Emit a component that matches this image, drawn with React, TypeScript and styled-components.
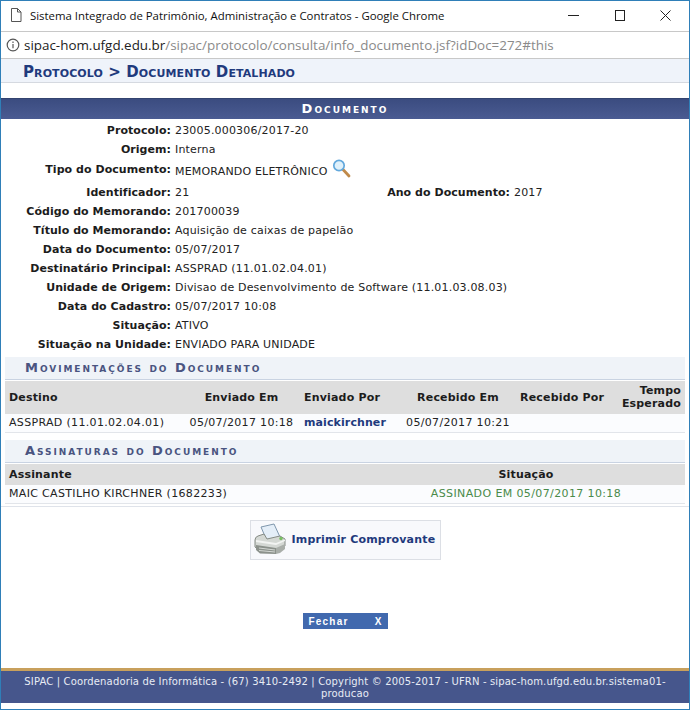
import { Fragment, FunctionComponent } from "react";
import styled, { createGlobalStyle } from "styled-components";

const GlobalStyle = createGlobalStyle`
  html, body {
    margin: 0;
    padding: 0;
    background: #ffffff;
  }
  * {
    box-sizing: border-box;
  }
`;

const Window = styled.div`
  width: 690px;
  height: 710px;
  display: flex;
  flex-direction: column;
  border: 1px solid #2f7fb8;
  font-family: "DejaVu Sans", Verdana, sans-serif;
  font-size: 11px;
  letter-spacing: 0.18px;
  color: #222222;
  background: #ffffff;
  overflow: hidden;
`;
const TitleBar = styled.div`
  height: 30px;
  flex: none;
  display: flex;
  align-items: center;
  padding: 0 1px 2px 8px;
  font-family: "Open Sans", sans-serif;
  font-size: 11.4px;
  letter-spacing: 0;
  color: #111111;
`;
const TitleText = styled.span`
  margin-left: 7px;
  flex: 1;
  white-space: nowrap;
`;
const WinButton = styled.div`
  width: 46px;
  height: 28px;
  display: flex;
  align-items: center;
  justify-content: center;
`;
const AddressBar = styled.div`
  height: 28px;
  flex: none;
  display: flex;
  align-items: center;
  padding-left: 5px;
  border-top: 1px solid #c8c8c8;
  border-bottom: 1px solid #c8c8c8;
  font-family: "Open Sans", sans-serif;
  font-size: 13.42px;
  letter-spacing: 0;
  color: #8a8a8a;
  white-space: nowrap;
`;
const Host = styled.span`
  color: #222222;
  margin-left: 4px;
`;
const Crumb = styled.div`
  height: 24px;
  flex: none;
  padding: 3px 0 0 22px;
  background: #eff3fa;
  border-bottom: 1px solid #d5d9e0;
  color: #1f3a7d;
  font-size: 15px;
  font-weight: bold;
  font-variant: small-caps;
  letter-spacing: 0.1px;
  line-height: 20px;
`;
const Page = styled.div`
  flex: 1;
  display: flex;
  flex-direction: column;
  padding-top: 15px;
`;
const Panel = styled.div`
  flex: none;
  padding: 0 4px 2px;
  border-bottom: 1px solid #dfe3ea;
`;
const PanelTitle = styled.div`
  height: 21px;
  margin: 0 -4px;
  background: linear-gradient(#3b4c80, #4a5b92);
  border-top: 1px solid #33436f;
  color: #ffffff;
  font-size: 13px;
  font-weight: bold;
  font-variant: small-caps;
  letter-spacing: 2px;
  line-height: 20px;
  text-align: center;
`;
const Fields = styled.div`
  display: grid;
  grid-template-columns: 166px 216px 123px 1fr;
  padding: 2px 0 3px;
`;
const Label = styled.div<{ $h?: number; $line?: number }>`
  height: ${(props) => props.$h ?? 19}px;
  line-height: ${(props) => props.$line ?? 19}px;
  font-weight: bold;
  letter-spacing: 0.05px;
  text-align: right;
  white-space: nowrap;
  color: #1c1c1c;
`;
const Value = styled.div<{ $wide?: boolean; $h?: number; $line?: number }>`
  height: ${(props) => props.$h ?? 19}px;
  line-height: ${(props) => props.$line ?? 19}px;
  padding-left: 4px;
  white-space: nowrap;
  grid-column: ${(props) => (props.$wide ? "span 3" : "auto")};
  position: relative;
`;
const Lens = styled.svg`
  position: absolute;
  left: 161px;
  top: 0;
`;
const SubTitle = styled.div`
  height: 23px;
  padding-left: 20px;
  background: #eff3f8;
  border-bottom: 1px solid #c9d3e2;
  color: #4a5480;
  font-size: 13px;
  font-weight: bold;
  font-variant: small-caps;
  letter-spacing: 1.95px;
  line-height: 21px;
`;
const Block = styled.div<{ $gap?: number }>`
  margin-top: ${(props) => props.$gap ?? 0}px;
`;
const Table = styled.table`
  width: 100%;
  table-layout: fixed;
  border-collapse: collapse;
  border-bottom: 1px solid #e2e5ea;
`;
const Head = styled.th<{ $align?: string; $tall?: boolean }>`
  height: ${(props) => (props.$tall ? "33px" : "21px")};
  padding: 0 4px;
  background: #dedede;
  border-top: 1px solid #ffffff;
  font-weight: bold;
  line-height: 13px;
  color: #1c1c1c;
  text-align: ${(props) => props.$align ?? "left"};
`;
const Cell = styled.td<{ $align?: string }>`
  height: 19px;
  padding: 0 4px;
  background: #fbfcfe;
  letter-spacing: 0.33px;
  white-space: nowrap;
  text-align: ${(props) => props.$align ?? "left"};
`;
const UserLink = styled.span`
  color: #1f3a7d;
  font-weight: bold;
  letter-spacing: 0.1px;
`;
const Signed = styled.span`
  color: #4a8a4a;
  letter-spacing: 0.38px;
`;
const Actions = styled.div`
  display: flex;
  flex-direction: column;
  align-items: center;
  padding-top: 13px;
`;
const PrintButton = styled.div`
  width: 191px;
  height: 40px;
  display: flex;
  align-items: center;
  gap: 5px;
  padding: 0 0 1px 3px;
  background: #f8f9fc;
  border: 1px solid #dcdfe5;
  color: #1f3a7d;
  font-weight: bold;
`;
const CloseButton = styled.div`
  width: 85px;
  height: 16px;
  margin-top: 53px;
  display: flex;
  justify-content: space-between;
  padding: 0 5px 0 6px;
  background: #4169ae;
  color: #ffffff;
  font-family: "Liberation Sans", Arial, sans-serif;
  font-size: 10px;
  font-weight: bold;
  letter-spacing: 1.2px;
  line-height: 17px;
`;
const Spacer = styled.div`
  flex: 1;
`;
const Footer = styled.div`
  height: 35px;
  flex: none;
  margin-bottom: 6px;
  padding: 5px 10px 0;
  background: #46568c;
  border-top: 3px solid #c8a05c;
  color: #e8ecf4;
  font-size: 10px;
  letter-spacing: 0.15px;
  line-height: 12px;
  text-align: center;
`;

const fields = [
  ["Protocolo:", "23005.000306/2017-20"],
  ["Origem:", "Interna"],
];
const fieldsAfter = [
  ["Código do Memorando:", "201700039"],
  ["Título do Memorando:", "Aquisição de caixas de papelão"],
  ["Data do Documento:", "05/07/2017"],
  ["Destinatário Principal:", "ASSPRAD (11.01.02.04.01)"],
  ["Unidade de Origem:", "Divisao de Desenvolvimento de Software (11.01.03.08.03)"],
  ["Data do Cadastro:", "05/07/2017 10:08"],
  ["Situação:", "ATIVO"],
  ["Situação na Unidade:", "ENVIADO PARA UNIDADE"],
];

const App: FunctionComponent = () => {
  return (
    <>
      <GlobalStyle />
      <Window>
        <TitleBar>
          <svg width="14" height="16" viewBox="0 0 14 16" fill="none" stroke="#555555">
            <path d="M2.5 1.5h6l3.5 3.5v9.5h-9.5z M8.5 1.5v3.5h3.5" />
          </svg>
          <TitleText>Sistema Integrado de Patrimônio, Administração e Contratos - Google Chrome</TitleText>
          <WinButton>
            <svg width="11" height="11" stroke="#222222"><path d="M0 5.5h11" /></svg>
          </WinButton>
          <WinButton>
            <svg width="11" height="11" stroke="#222222" fill="none"><rect x="1.5" y="0.5" width="9" height="10" /></svg>
          </WinButton>
          <WinButton>
            <svg width="11" height="11" stroke="#222222"><path d="M0.5 0.5l10 10M10.5 0.5l-10 10" /></svg>
          </WinButton>
        </TitleBar>
        <AddressBar>
          <svg width="14" height="14" viewBox="0 0 14 14" fill="none" stroke="#555555" strokeWidth="1.2">
            <circle cx="7" cy="7" r="5.8" />
            <path d="M7 6v4.2M7 3.6v1.3" />
          </svg>
          <Host>sipac-hom.ufgd.edu.br</Host>/sipac/protocolo/consulta/info_documento.jsf?idDoc=272#this
        </AddressBar>
        <Crumb>Protocolo &gt; Documento Detalhado</Crumb>
        <Page>
          <Panel>
            <PanelTitle>Documento</PanelTitle>
            <Fields>
              {fields.map(([k, v]) => (
                <Fragment key={k}>
                  <Label>{k}</Label>
                  <Value $wide>{v}</Value>
                </Fragment>
              ))}
              <Label $h={23} $line={21}>Tipo do Documento:</Label>
              <Value $wide $h={23} $line={26}>
                MEMORANDO ELETRÔNICO
                <Lens width="19" height="19" viewBox="0 0 19 19">
                  <path d="M11 10.5l6 6.5" stroke="#c08a4a" strokeWidth="2.8" strokeLinecap="round" />
                  <circle cx="7" cy="6.5" r="5.2" fill="#dff1fb" stroke="#62a8dc" strokeWidth="1.7" />
                </Lens>
              </Value>
              <Label $h={20} $line={21}>Identificador:</Label>
              <Value $h={20} $line={21}>21</Value>
              <Label $h={20} $line={21}>Ano do Documento:</Label>
              <Value $h={20} $line={21}>2017</Value>
              {fieldsAfter.map(([k, v]) => (
                <Fragment key={k}>
                  <Label>{k}</Label>
                  <Value $wide>{v}</Value>
                </Fragment>
              ))}
            </Fields>
            <SubTitle>Movimentações do Documento</SubTitle>
            <Table>
              <colgroup>
                <col style={{ width: 178 }} />
                <col style={{ width: 117 }} />
                <col style={{ width: 100 }} />
                <col style={{ width: 116 }} />
                <col style={{ width: 97 }} />
                <col />
              </colgroup>
              <thead>
                <tr>
                  <Head $tall>Destino</Head>
                  <Head $align="center">Enviado Em</Head>
                  <Head>Enviado Por</Head>
                  <Head $align="center">Recebido Em</Head>
                  <Head>Recebido Por</Head>
                  <Head $align="right">Tempo Esperado</Head>
                </tr>
              </thead>
              <tbody>
                <tr>
                  <Cell>ASSPRAD (11.01.02.04.01)</Cell>
                  <Cell $align="center">05/07/2017 10:18</Cell>
                  <Cell><UserLink>maickirchner</UserLink></Cell>
                  <Cell $align="center">05/07/2017 10:21</Cell>
                  <Cell />
                  <Cell />
                </tr>
              </tbody>
            </Table>
            <Block $gap={7}>
              <SubTitle>Assinaturas do Documento</SubTitle>
              <Table>
                <colgroup>
                  <col />
                  <col style={{ width: 318 }} />
                </colgroup>
                <thead>
                  <tr>
                    <Head>Assinante</Head>
                    <Head $align="center">Situação</Head>
                  </tr>
                </thead>
                <tbody>
                  <tr>
                    <Cell>MAIC CASTILHO KIRCHNER (1682233)</Cell>
                    <Cell $align="center"><Signed>ASSINADO EM 05/07/2017 10:18</Signed></Cell>
                  </tr>
                </tbody>
              </Table>
            </Block>
          </Panel>
          <Actions>
            <PrintButton>
              <svg width="33" height="33" viewBox="0 0 33 33">
                <path d="M7 4l13-3 6 13-13 4z" fill="#e4eef8" stroke="#7f97ad" />
                <path d="M1 17q0-3 3-4l6-2 3 5 13-3 5 3v7l-6 4-19 1-5-4z" fill="#d4d8d4" stroke="#858b85" />
                <path d="M2 17l20 3 9-3.500v1.500l-9 4-20-3z" fill="#f2f4f2" />
                <path d="M2 22l20 3v6l-16-.5L2 27z" fill="#8b918b" />
                <path d="M22 25l9-4v5l-5 4-4 1z" fill="#a9aea9" />
                <path d="M5 25l16 2M5 27.500l16 1.500" stroke="#d4d8d4" />
                <circle cx="27" cy="15.500" r="1.700" fill="#79bf63" />
              </svg>
              Imprimir Comprovante
            </PrintButton>
            <CloseButton>
              <span>Fechar</span>
              <span>X</span>
            </CloseButton>
          </Actions>
          <Spacer />
          <Footer>
            SIPAC | Coordenadoria de Informática - (67) 3410-2492 | Copyright © 2005-2017 - UFRN - sipac-hom.ufgd.edu.br.sistema01-producao
          </Footer>
        </Page>
      </Window>
    </>
  );
};

export default App;
